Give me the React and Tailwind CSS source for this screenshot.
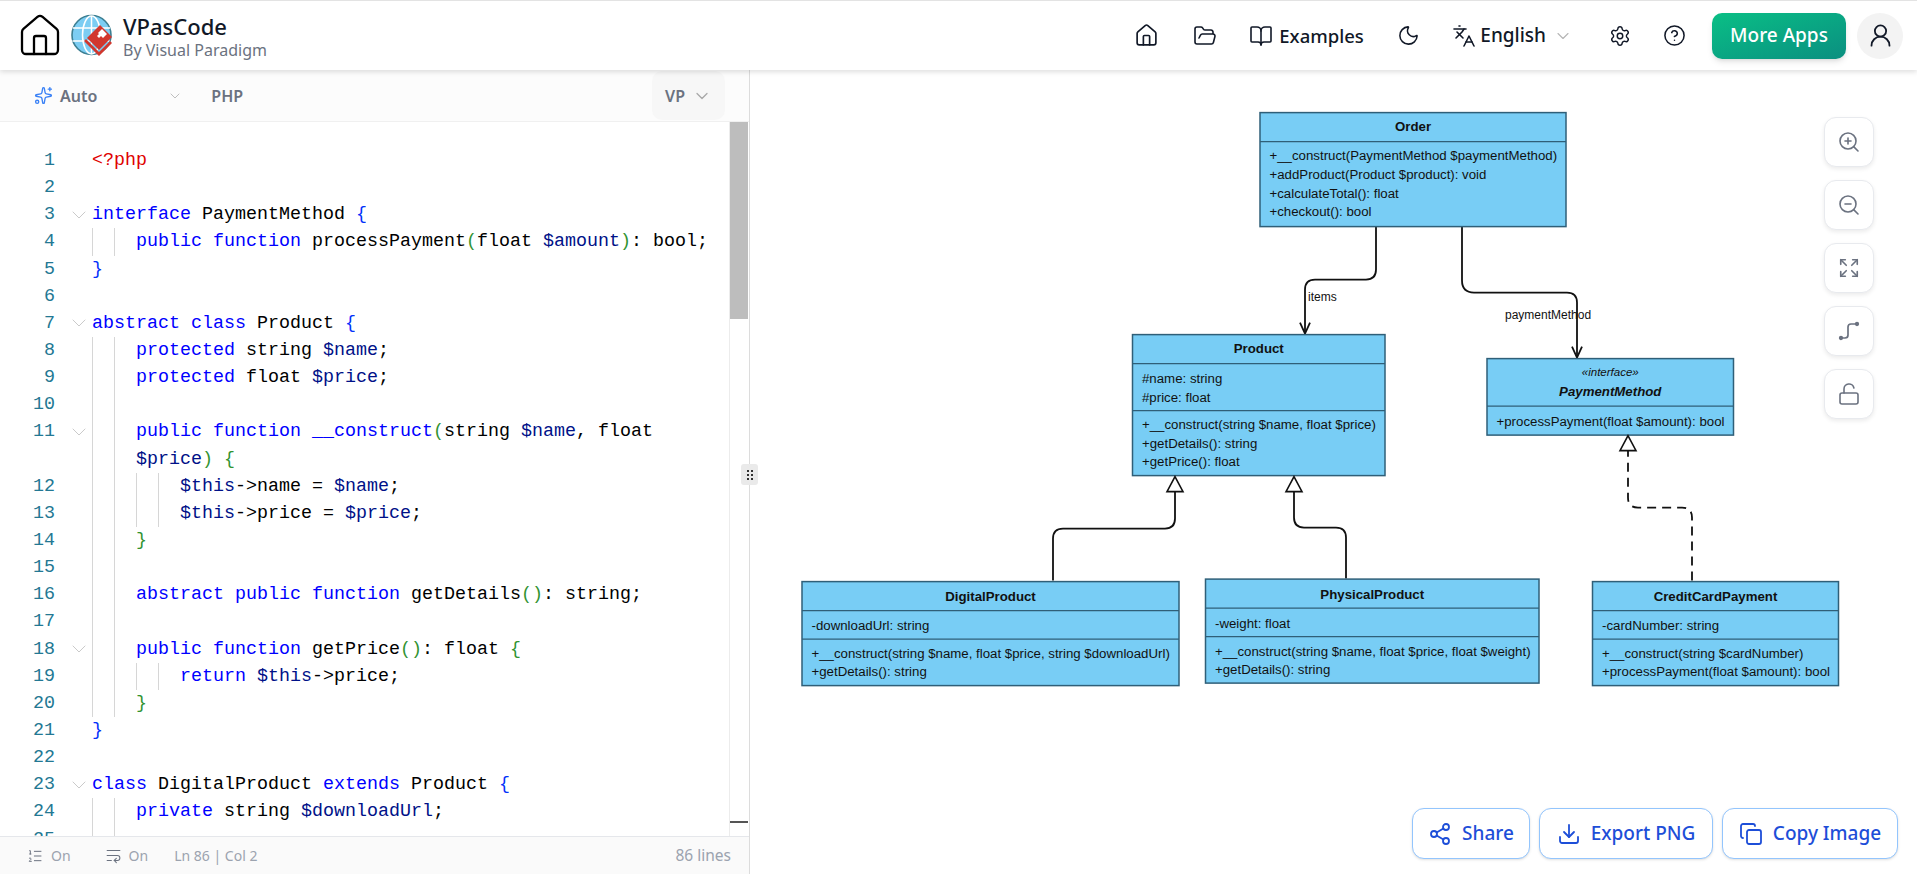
import {
  House, FolderOpen, BookOpen, Moon, Languages, ChevronDown, Settings, CircleHelp, UserRound,
  Sparkles, ZoomIn, ZoomOut, Expand, LockOpen, ListOrdered, WrapText, Share2, Download, Copy,
} from 'lucide-react'

const tone = {
  k: 'text-[#0000ff]',
  v: 'text-[#001188]',
  p: 'text-[#319331]',
  b: 'text-[#0431fa]',
  r: 'text-[#e00000]',
  n: 'text-black',
}

const k = (t) => ['k', t]
const v = (t) => ['v', t]
const p = (t) => ['p', t]
const b = (t) => ['b', t]
const n = (t) => ['n', t]

// num, guides (22px each), fold arrow, tokens
const rows = [
  { num: 1, code: [['r', '<?php']] },
  { num: 2 },
  { num: 3, fold: true, code: [k('interface'), n(' PaymentMethod '), b('{')] },
  { num: 4, guides: 2, code: [k('public function'), n(' processPayment'), p('('), n('float '), v('$amount'), p(')'), n(': bool;')] },
  { num: 5, code: [b('}')] },
  { num: 6 },
  { num: 7, fold: true, code: [k('abstract class'), n(' Product '), b('{')] },
  { num: 8, guides: 2, code: [k('protected'), n(' string '), v('$name'), n(';')] },
  { num: 9, guides: 2, code: [k('protected'), n(' float '), v('$price'), n(';')] },
  { num: 10, guides: 2 },
  { num: 11, guides: 2, fold: true, code: [k('public function __construct'), p('('), n('string '), v('$name'), n(', float')] },
  { guides: 2, code: [v('$price'), p(')'), n(' '), p('{')] },
  { num: 12, guides: 4, code: [v('$this'), n('->name = '), v('$name'), n(';')] },
  { num: 13, guides: 4, code: [v('$this'), n('->price = '), v('$price'), n(';')] },
  { num: 14, guides: 2, code: [p('}')] },
  { num: 15, guides: 2 },
  { num: 16, guides: 2, code: [k('abstract public function'), n(' getDetails'), p('()'), n(': string;')] },
  { num: 17, guides: 2 },
  { num: 18, guides: 2, fold: true, code: [k('public function'), n(' getPrice'), p('()'), n(': float '), p('{')] },
  { num: 19, guides: 4, code: [k('return'), n(' '), v('$this'), n('->price;')] },
  { num: 20, guides: 2, code: [p('}')] },
  { num: 21, code: [b('}')] },
  { num: 22 },
  { num: 23, fold: true, code: [k('class'), n(' DigitalProduct '), k('extends'), n(' Product '), b('{')] },
  { num: 24, guides: 2, code: [k('private'), n(' string '), v('$downloadUrl'), n(';')] },
  { num: 25, guides: 2 },
]

const CodeRow = ({ num, guides = 0, fold, code = [] }) => (
  <div className="flex h-[27.15px] shrink-0 items-stretch leading-[27px]">
    <div className="w-[55px] shrink-0 text-right text-[#237893]">{num}</div>
    <div className="flex w-[37px] shrink-0 items-center pl-[12px]">
      {fold && <ChevronDown size={24} strokeWidth={0.8} className="text-[#bdbdbd]" />}
    </div>
    {Array.from({ length: guides }).map((_, i) => (
      <div key={i} className="w-[22px] shrink-0 border-l border-[#d6d6d6]" />
    ))}
    <div className="whitespace-pre">
      {code.map(([c, t], i) => (
        <span key={i} className={tone[c]}>{t}</span>
      ))}
    </div>
  </div>
)

const Logo = () => (
  <svg width="42" height="44" viewBox="0 0 42 44" className="shrink-0">
    <circle cx="20.5" cy="21" r="19.5" fill="#7ccdf3" stroke="#3d7f92" strokeWidth="1.6" />
    <g fill="none" stroke="#ffffff" strokeWidth="1.5">
      <ellipse cx="20.5" cy="21" rx="9" ry="19" />
      <path d="M20.5 2v38M2 14h37M1.5 27h37" />
    </g>
    <path d="M29 11l12 12-13 13-12-12z" fill="#d1372e" />
    <path d="M27 19l4-4 5 5-4 4-2-2-2 2-2-2 2-2z" fill="#ffffff" />
    <path d="M13 27l2-2 13 13 11-11 2 2-13 13z" fill="#d1372e" />
  </svg>
)

const TopIcon = ({ children, className = '' }) => (
  <div className={`flex h-[44px] w-[44px] items-center justify-center text-[#111827] ${className}`}>{children}</div>
)

const Header = () => (
  <header className="relative z-10 flex h-[70px] shrink-0 items-center border-t border-[#e3e3e3] bg-white pl-[16px] pr-[14px] shadow-[0_2px_5px_rgba(0,0,0,0.13)]">
    <House size={48} strokeWidth={1.15} className="text-black" />
    <div className="ml-[7px]"><Logo /></div>
    <div className="ml-[10px] flex flex-col">
      <span className="text-[22px] leading-[28px] font-medium text-[#111827]">VPasCode</span>
      <span className="text-[16px] leading-[20px] text-[#6b7280]">By Visual Paradigm</span>
    </div>
    <div className="ml-auto flex items-center">
      <TopIcon><House size={25} strokeWidth={1.6} /></TopIcon>
      <TopIcon className="ml-[15px]"><FolderOpen size={24} strokeWidth={1.6} /></TopIcon>
      <div className="ml-[22px] flex items-center gap-[6px] text-[18.5px] font-medium text-[#111827]">
        <BookOpen size={24} strokeWidth={1.6} />
        <span>Examples</span>
      </div>
      <TopIcon className="ml-[23px]"><Moon size={23} strokeWidth={1.6} /></TopIcon>
      <div className="ml-[21px] flex items-center gap-[4.5px] text-[19px] font-medium text-[#111827]">
        <Languages size={24} strokeWidth={1.6} />
        <span>English</span>
        <ChevronDown size={20} strokeWidth={1.3} className="ml-[2px] text-[#b5b5b5]" />
      </div>
      <TopIcon className="ml-[25px]"><Settings size={22} strokeWidth={1.6} /></TopIcon>
      <TopIcon className="ml-[10.5px]"><CircleHelp size={23} strokeWidth={1.6} /></TopIcon>
      <button className="ml-[16px] h-[46px] w-[134px] rounded-[10px] bg-gradient-to-br from-[#0abf85] to-[#0b8f80] text-[19px] font-medium text-white shadow-md">
        More Apps
      </button>
      <div className="ml-[11px] flex h-[46px] w-[46px] items-center justify-center rounded-full bg-[#f3f3f3] text-[#111827]">
        <UserRound size={27} strokeWidth={1.6} />
      </div>
    </div>
  </header>
)

const EditorPanel = () => (
  <section className="flex w-[750px] shrink-0 flex-col border-r border-[#dcdcdc] bg-white">
    <div className="flex h-[52px] shrink-0 items-center border-b border-[#f0f0f0] bg-[#fcfcfc] text-[16px] font-semibold text-[#6b7280]">
      <Sparkles size={19} strokeWidth={1.7} className="ml-[34px] text-[#3b82f6]" />
      <span className="ml-[7px]">Auto</span>
      <ChevronDown size={16} strokeWidth={1.3} className="ml-[70px] text-[#b5b5b5]" />
      <span className="ml-[28px]">PHP</span>
      <div className="ml-auto mr-[24px] flex h-[49px] w-[73px] items-center justify-center gap-[7px] rounded-[10px] bg-[#f7f7f7]">
        <span>VP</span>
        <ChevronDown size={20} strokeWidth={1.5} className="text-[#a8a8a8]" />
      </div>
    </div>
    <div className="relative flex min-h-0 flex-1">
      <div className="min-w-0 flex-1 overflow-hidden pt-[25px] font-['Liberation_Mono',monospace] text-[18.33px]">
        {rows.map((row, i) => <CodeRow key={i} {...row} />)}
      </div>
      <div className="relative w-[20px] shrink-0 border-l border-[#ececec] pr-[1px]">
        <div className="h-[197px] bg-[#bdbdbd]" />
        <div className="absolute left-0 right-[1px] top-[699px] h-[2px] bg-[#555555]" />
      </div>
      <div className="absolute right-[-9px] top-[342px] z-10 flex h-[21px] w-[17px] items-center justify-center rounded-[3px] bg-[#eaeaea]">
        <div className="grid grid-cols-2 gap-[2px]">
          {Array.from({ length: 6 }).map((_, i) => (
            <div key={i} className="h-[2px] w-[2px] bg-[#333333]" />
          ))}
        </div>
      </div>
    </div>
    <footer className="flex h-[38px] shrink-0 items-center border-t border-[#e5e7eb] bg-[#fafafa] text-[14px] text-[#9ca3af]">
      <ListOrdered size={16} strokeWidth={1.5} className="ml-[27px] text-[#6b7280]" />
      <span className="ml-[8px]">On</span>
      <WrapText size={17} strokeWidth={1.5} className="ml-[34px] text-[#6b7280]" />
      <span className="ml-[7px]">On</span>
      <span className="ml-[26px]">Ln 86 | Col 2</span>
      <span className="ml-auto mr-[18px] text-[15.5px]">86 lines</span>
    </footer>
  </section>
)

const classes = [
  { x: 1260, y: 112, w: 306, h: 114, title: 'Order', lines: [141], rows: [
    [155, '+__construct(PaymentMethod $paymentMethod)'], [174, '+addProduct(Product $product): void'],
    [192.5, '+calculateTotal(): float'], [211, '+checkout(): bool'] ], titleY: 126 },
  { x: 1132.5, y: 334, w: 252.5, h: 141, title: 'Product', lines: [363, 410], rows: [
    [377.5, '#name: string'], [396.5, '#price: float'], [423.5, '+__construct(string $name, float $price)'],
    [442.5, '+getDetails(): string'], [460.5, '+getPrice(): float'] ], titleY: 348 },
  { x: 1487, y: 358, w: 246.5, h: 76.5, title: 'PaymentMethod', italic: true, lines: [405.5], rows: [
    [420.5, '+processPayment(float $amount): bool'] ], titleY: 390.5 },
  { x: 802, y: 581, w: 377, h: 104, title: 'DigitalProduct', lines: [610, 638.5], rows: [
    [624.5, '-downloadUrl: string'], [653, '+__construct(string $name, float $price, string $downloadUrl)'],
    [671, '+getDetails(): string'] ], titleY: 595.5 },
  { x: 1205.5, y: 578.5, w: 333.5, h: 104, title: 'PhysicalProduct', lines: [607.5, 636], rows: [
    [622.5, '-weight: float'], [651, '+__construct(string $name, float $price, float $weight)'],
    [668.5, '+getDetails(): string'] ], titleY: 593.5 },
  { x: 1592.5, y: 581, w: 246, h: 104, title: 'CreditCardPayment', lines: [610, 638.5], rows: [
    [624.5, '-cardNumber: string'], [652.5, '+__construct(string $cardNumber)'],
    [670.5, '+processPayment(float $amount): bool'] ], titleY: 595.5 },
]

const UmlClass = ({ x, y, w, h, title, titleY, italic, lines, rows }) => (
  <g>
    <rect x={x} y={y} width={w} height={h} fill="#78cdf5" stroke="#2f5f78" strokeWidth="1.5" />
    {lines.map((ly) => (
      <line key={ly} x1={x} x2={x + w} y1={ly} y2={ly} stroke="#2f5f78" strokeWidth="1.2" />
    ))}
    {italic && (
      <text x={x + w / 2} y={375} textAnchor="middle" className="fill-[#111111] text-[11.5px] italic">«interface»</text>
    )}
    <text x={x + w / 2} y={titleY + 4.5} textAnchor="middle" className={`fill-[#111111] text-[13.25px] font-bold ${italic ? 'italic' : ''}`}>
      {title}
    </text>
    {rows.map(([ry, t]) => (
      <text key={ry} x={x + 9.5} y={ry + 4.5} className="fill-[#111111] text-[13.25px]">{t}</text>
    ))}
  </g>
)

const Diagram = () => (
  <svg viewBox="750 69.4 1167 804" className="h-full w-full font-['Liberation_Sans',sans-serif]">
    <g fill="none" stroke="#111111" strokeWidth="1.8">
      <path d="M1376 226V269Q1376 279 1366 279H1315Q1305 279 1305 289V333" />
      <path d="M1300 322L1305 333L1310 322" />
      <path d="M1462 226V280Q1462 292 1474 292H1567Q1577 292 1577 302V357" />
      <path d="M1572 346L1577 357L1582 346" />
      <path d="M1053 580V538Q1053 528 1063 528H1165Q1175 528 1175 518V491" />
      <path d="M1346 578V537Q1346 527 1336 527H1304Q1294 527 1294 517V491" />
      <path d="M1692 580V517Q1692 507 1682 507H1638Q1628 507 1628 497V450" strokeDasharray="9 6" />
    </g>
    {classes.map((c) => <UmlClass key={c.title} {...c} />)}
    <g fill="#ffffff" stroke="#111111" strokeWidth="1.6">
      <polygon points="1175,476 1167,491 1183,491" />
      <polygon points="1294,476 1286,491 1302,491" />
      <polygon points="1628,435 1620,450 1636,450" />
    </g>
    <text x="1308" y="300" className="fill-[#111111] text-[12px]">items</text>
    <text x="1505" y="318" className="fill-[#111111] text-[12px]">paymentMethod</text>
  </svg>
)

const RouteIcon = () => (
  <svg width="24" height="24" viewBox="0 0 24 24" fill="none" stroke="currentColor" strokeWidth="1.7" strokeLinecap="round">
    <path d="M4 19h4c2 0 3-1 3-3V8c0-2 1-3 3-3h6" />
    <circle cx="4" cy="19" r="1.3" fill="currentColor" />
    <circle cx="20" cy="5" r="1.3" fill="currentColor" />
  </svg>
)

const ToolButton = ({ children }) => (
  <div className="flex h-[50px] w-[50px] items-center justify-center rounded-[12px] border border-[#e8eaee] bg-white text-[#6b7280] shadow-[0_2px_4px_rgba(0,0,0,0.08)]">
    {children}
  </div>
)

const ActionButton = ({ icon: Icon, label, width }) => (
  <button className={`flex h-[51px] items-center justify-center gap-[10px] rounded-[12px] border border-[#93c5fd] bg-white text-[19px] font-medium text-[#1d4ed8] shadow-sm ${width}`}>
    <Icon size={24} strokeWidth={1.8} />
    {label}
  </button>
)

export default function App() {
  return (
    <div className="flex h-screen w-full flex-col overflow-hidden bg-white font-['Noto_Sans',sans-serif]">
      <Header />
      <main className="flex min-h-0 flex-1">
        <EditorPanel />
        <section className="relative min-w-0 flex-1">
          <Diagram />
          <div className="absolute right-[43px] top-[47px] flex flex-col gap-[13px]">
            <ToolButton><ZoomIn size={24} strokeWidth={1.6} /></ToolButton>
            <ToolButton><ZoomOut size={24} strokeWidth={1.6} /></ToolButton>
            <ToolButton><Expand size={22} strokeWidth={1.8} /></ToolButton>
            <ToolButton><RouteIcon /></ToolButton>
            <ToolButton><LockOpen size={24} strokeWidth={1.6} /></ToolButton>
          </div>
          <div className="absolute bottom-[15px] right-[19px] flex gap-[9px]">
            <ActionButton icon={Share2} label="Share" width="w-[118px]" />
            <ActionButton icon={Download} label="Export PNG" width="w-[174px]" />
            <ActionButton icon={Copy} label="Copy Image" width="w-[176px]" />
          </div>
        </section>
      </main>
    </div>
  )
}
